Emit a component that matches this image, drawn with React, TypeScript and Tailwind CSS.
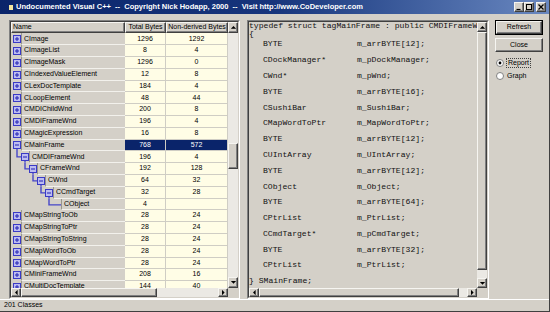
type Row = {
  name: string;
  total: string;
  nd: string;
  level?: number;
  exp?: "+" | "-" | null;
  sel?: boolean;
};

const rows: Row[] = [
  { name: "CImage", total: "1296", nd: "1292" },
  { name: "CImageList", total: "8", nd: "4" },
  { name: "CImageMask", total: "1296", nd: "0" },
  { name: "CIndexedValueElement", total: "12", nd: "8" },
  { name: "CLexDocTemplate", total: "184", nd: "4" },
  { name: "CLoopElement", total: "48", nd: "44" },
  { name: "CMDIChildWnd", total: "200", nd: "8" },
  { name: "CMDIFrameWnd", total: "196", nd: "4" },
  { name: "CMagicExpression", total: "16", nd: "8" },
  { name: "CMainFrame", total: "768", nd: "572", exp: "-", sel: true },
  { name: "CMDIFrameWnd", total: "196", nd: "4", level: 1, exp: "-" },
  { name: "CFrameWnd", total: "192", nd: "128", level: 2, exp: "-" },
  { name: "CWnd", total: "64", nd: "32", level: 3, exp: "-" },
  { name: "CCmdTarget", total: "32", nd: "28", level: 4, exp: "-" },
  { name: "CObject", total: "4", nd: "", level: 5, exp: null },
  { name: "CMapStringToOb", total: "28", nd: "24" },
  { name: "CMapStringToPtr", total: "28", nd: "24" },
  { name: "CMapStringToString", total: "28", nd: "24" },
  { name: "CMapWordToOb", total: "28", nd: "24" },
  { name: "CMapWordToPtr", total: "28", nd: "24" },
  { name: "CMiniFrameWnd", total: "208", nd: "16" },
  { name: "CMultiDocTemplate", total: "144", nd: "40" },
];

const members: [string, string][] = [
  ["BYTE", "m_arrBYTE[12];"],
  ["CDockManager*", "m_pDockManager;"],
  ["CWnd*", "m_pWnd;"],
  ["BYTE", "m_arrBYTE[16];"],
  ["CSushiBar", "m_SushiBar;"],
  ["CMapWordToPtr", "m_MapWordToPtr;"],
  ["BYTE", "m_arrBYTE[12];"],
  ["CUIntArray", "m_UIntArray;"],
  ["BYTE", "m_arrBYTE[12];"],
  ["CObject", "m_Object;"],
  ["BYTE", "m_arrBYTE[64];"],
  ["CPtrList", "m_PtrList;"],
  ["CCmdTarget*", "m_pCmdTarget;"],
  ["BYTE", "m_arrBYTE[32];"],
  ["CPtrList", "m_PtrList;"],
];

const indent = ["w-[2px]", "w-[10px]", "w-[18px]", "w-[26px]", "w-[34px]", "w-[42px]"];

const raised =
  "border border-t-[#f6f5f1] border-l-[#f6f5f1] border-r-[#404040] border-b-[#404040] shadow-[inset_-1px_-1px_0_#808080] bg-[#d4d0c8]";

function Arrow({ dir }: { dir: "up" | "down" | "left" | "right" }) {
  const pts = {
    up: "0,4 3.5,0.5 7,4",
    down: "0,0.5 3.5,4 7,0.5",
    left: "4,0 0.5,3.5 4,7",
    right: "0.5,0 4,3.5 0.5,7",
  }[dir];
  const vertical = dir === "up" || dir === "down";
  return (
    <svg width={vertical ? 7 : 5} height={vertical ? 5 : 7} viewBox={vertical ? "0 0 7 5" : "0 0 5 7"} className="block scale-75">
      <polygon points={pts} fill="#000" />
    </svg>
  );
}

function ArrowBtn({ dir, className }: { dir: "up" | "down" | "left" | "right"; className: string }) {
  return (
    <div className={`${raised} ${className} flex shrink-0 items-center justify-center`}>
      <Arrow dir={dir} />
    </div>
  );
}

function Expander({ open }: { open: boolean }) {
  return (
    <svg width="8" height="8" viewBox="0 0 8 8" className="relative block shrink-0">
      <rect x="0.5" y="0.5" width="7" height="7" fill="#bcbcf0" stroke="#3a3ac6" />
      <path d="M2 4h4" stroke="#2020b4" />
      {!open && <path d="M4 2v4" stroke="#2020b4" />}
    </svg>
  );
}

function TreeLines({ level, exp }: { level: number; exp: "+" | "-" | null }) {
  const h = 11.8;
  const mid = h / 2;
  const parts: string[] = [];
  if (exp === "-") {
    const x = 2 + 8 * level + 4;
    parts.push(`M${x} ${mid + 3}V${h}`);
  }
  if (level > 0) {
    const px = 2 + 8 * (level - 1) + 4;
    const end = exp ? 2 + 8 * level : 10 + 8 * level;
    parts.push(`M${px} 0V${mid}H${end}`);
  }
  if (parts.length === 0) return null;
  return (
    <svg className="absolute left-0 top-0" width="60" height={h} viewBox={`0 0 60 ${h}`}>
      <path d={parts.join(" ")} stroke="#4646c8" strokeWidth="1.4" fill="none" />
    </svg>
  );
}

function ClassRow({ row }: { row: Row }) {
  const level = row.level ?? 0;
  const exp = row.exp === undefined ? "+" : row.exp;
  return (
    <div className="flex h-[11.8px] shrink-0">
      <div className="relative flex w-[114px] items-center bg-[#d4d0c8]">
        <TreeLines level={level} exp={exp} />
        <div className={`${indent[level]} shrink-0`} />
        {exp ? <Expander open={exp === "-"} /> : <div className="w-[8px] shrink-0" />}
        <div className="flex h-full flex-1 items-center border-b border-l border-b-[#f2f1ec] border-l-[#98958d] pl-[2px] text-black">
          {row.name}
        </div>
      </div>
      <div
        className={`flex w-[41px] items-center justify-center border-b border-r border-[#cfcdc4] ${
          row.sel ? "bg-[#0a246a] text-white" : "bg-[#fffde6] text-black"
        }`}
      >
        {row.total}
      </div>
      <div
        className={`flex w-[62px] items-center justify-center border-b border-r border-[#cfcdc4] ${
          row.sel ? "bg-[#0a246a] text-white" : "bg-[#fffde6] text-black"
        }`}
      >
        {row.nd}
      </div>
    </div>
  );
}

function Sunken({ className, children }: { className: string; children: React.ReactNode }) {
  return (
    <div className={`${className} border border-t-[#808080] border-l-[#808080] border-r-white border-b-white`}>
      <div className="flex h-full flex-col border border-t-[#404040] border-l-[#404040] border-r-[#d4d0c8] border-b-[#d4d0c8]">
        {children}
      </div>
    </div>
  );
}

function ClassList() {
  return (
    <Sunken className="h-[279px] w-[231px] shrink-0">
      <div className="flex h-[266px]">
        <div className="flex w-[217px] flex-col overflow-hidden">
          <div className="flex h-[11.4px] shrink-0">
            <div className={`${raised} flex w-[114px] items-center pl-[1px]`}>Name</div>
            <div className={`${raised} flex w-[41px] items-center justify-center border-t-[#808080] border-l-[#808080]`}>
              Total Bytes
            </div>
            <div className={`${raised} flex w-[62px] items-center justify-center`}>Non-derived Bytes</div>
          </div>
          {rows.map((row, i) => (
            <ClassRow key={i} row={row} />
          ))}
        </div>
        <div className="flex w-[10px] flex-col bg-[#ebe9e4]">
          <ArrowBtn dir="up" className="h-[11px]" />
          <div className="h-[110px]" />
          <div className={`${raised} h-[26px]`} />
          <div className="flex-1" />
          <ArrowBtn dir="down" className="h-[11px]" />
        </div>
      </div>
      <div className="flex h-[9px]">
        <div className="flex w-[217px] bg-[#ebe9e4]">
          <ArrowBtn dir="left" className="w-[10px]" />
          <div className={`${raised} w-[136px]`} />
          <div className="flex-1" />
          <ArrowBtn dir="right" className="w-[10px]" />
        </div>
        <div className="w-[10px] bg-[#d4d0c8]" />
      </div>
    </Sunken>
  );
}

function CodeView() {
  return (
    <Sunken className="h-[279px] w-[242px] shrink-0">
      <div className="flex h-[266px]">
        <div className="w-[228px] overflow-hidden whitespace-pre font-['Liberation_Mono',monospace] text-[8.1px] text-[#111]">
          <div className="flex h-[8px] items-center leading-[8px]">typedef struct tagMainFrame : public CMDIFrameWnd</div>
          <div className="flex h-[6.5px] items-end leading-[6px]">{"{"}</div>
          {members.map(([type, name], i) => (
            <div key={i} className="flex h-[15.8px] items-center pl-[14px]">
              <span className="w-[94px] shrink-0">{type}</span>
              <span>{name}</span>
            </div>
          ))}
          <div className="flex h-[15.8px] items-center">{"} SMainFrame;"}</div>
        </div>
        <div className="flex w-[10px] flex-col bg-[#ebe9e4]">
          <ArrowBtn dir="up" className="h-[10px]" />
          <div className={`${raised} h-[238px]`} />
          <div className="flex-1" />
          <ArrowBtn dir="down" className="h-[10px]" />
        </div>
      </div>
      <div className="flex h-[9px]">
        <div className="flex w-[228px] bg-[#ebe9e4]">
          <ArrowBtn dir="left" className="w-[10px]" />
          <div className={`${raised} w-[200px]`} />
          <div className="flex-1" />
          <ArrowBtn dir="right" className="w-[10px]" />
        </div>
        <div className="w-[10px] bg-[#d4d0c8]" />
      </div>
    </Sunken>
  );
}

function Radio({ checked }: { checked: boolean }) {
  return (
    <svg width="8" height="8" viewBox="0 0 8 8" className="block shrink-0">
      <circle cx="4" cy="4" r="3.5" fill="#fff" stroke="#808080" />
      {checked && <circle cx="4" cy="4" r="1.4" fill="#000" />}
    </svg>
  );
}

function TitleButton({ kind }: { kind: "min" | "max" | "close" }) {
  return (
    <div className={`${raised} flex h-[10px] w-[10px] items-center justify-center`}>
      <svg width="6" height="6" viewBox="0 0 6 6" className="block">
        {kind === "min" && <path d="M0.5 5.5h4" stroke="#000" strokeWidth="1.2" />}
        {kind === "max" && <rect x="0.5" y="0.5" width="5" height="5" fill="none" stroke="#000" strokeWidth="1" />}
        {kind === "close" && <path d="M0.5 0.5l5 5M5.5 0.5l-5 5" stroke="#000" strokeWidth="1.3" />}
      </svg>
    </div>
  );
}

export default function App() {
  return (
    <div className="flex h-[312px] w-[550px] flex-col overflow-hidden border-b border-r border-[#404040] bg-[#d4d0c8] font-['Liberation_Sans',Arial,sans-serif] text-[7px] text-black">
      <div className="flex h-[14px] shrink-0 items-center bg-gradient-to-r from-[#0a246a] via-[#17357c] to-[#6a88c0] pl-[9px] pr-[3px]">
        <div className="mr-[3px] h-[5px] w-[4px] bg-[#f4e6a0]" />
        <span className="flex-1 whitespace-pre text-[7.5px] font-bold text-white">
          Undocumented Visual C++  --  Copyright Nick Hodapp, 2000  --  Visit http://www.CoDeveloper.com
        </span>
        <div className="flex items-center">
          <TitleButton kind="min" />
          <TitleButton kind="max" />
          <div className="w-[2px]" />
          <TitleButton kind="close" />
        </div>
      </div>
      <div className="mt-[6px] flex pl-[9px]">
        <ClassList />
        <div className="w-[7px]" />
        <CodeView />
        <div className="ml-[6px] flex w-[48px] flex-col">
          <div className="border border-black">
            <div className={`${raised} flex h-[13px] items-center justify-center`}>Refresh</div>
          </div>
          <div className={`${raised} mt-[3px] flex h-[14px] items-center justify-center`}>Close</div>
          <div className="mt-[5px] flex h-[12px] items-center gap-[2px] pl-[1px]">
            <Radio checked />
            <span className="border border-dotted border-[#404040] px-[1px] leading-[8px]">Report</span>
          </div>
          <div className="mt-[1px] flex h-[12px] items-center gap-[3px] pl-[1px]">
            <Radio checked={false} />
            <span>Graph</span>
          </div>
        </div>
      </div>
      <div className="flex flex-1 items-center border-t border-[#ffffff] pl-[4px]">201 Classes</div>
    </div>
  );
}
